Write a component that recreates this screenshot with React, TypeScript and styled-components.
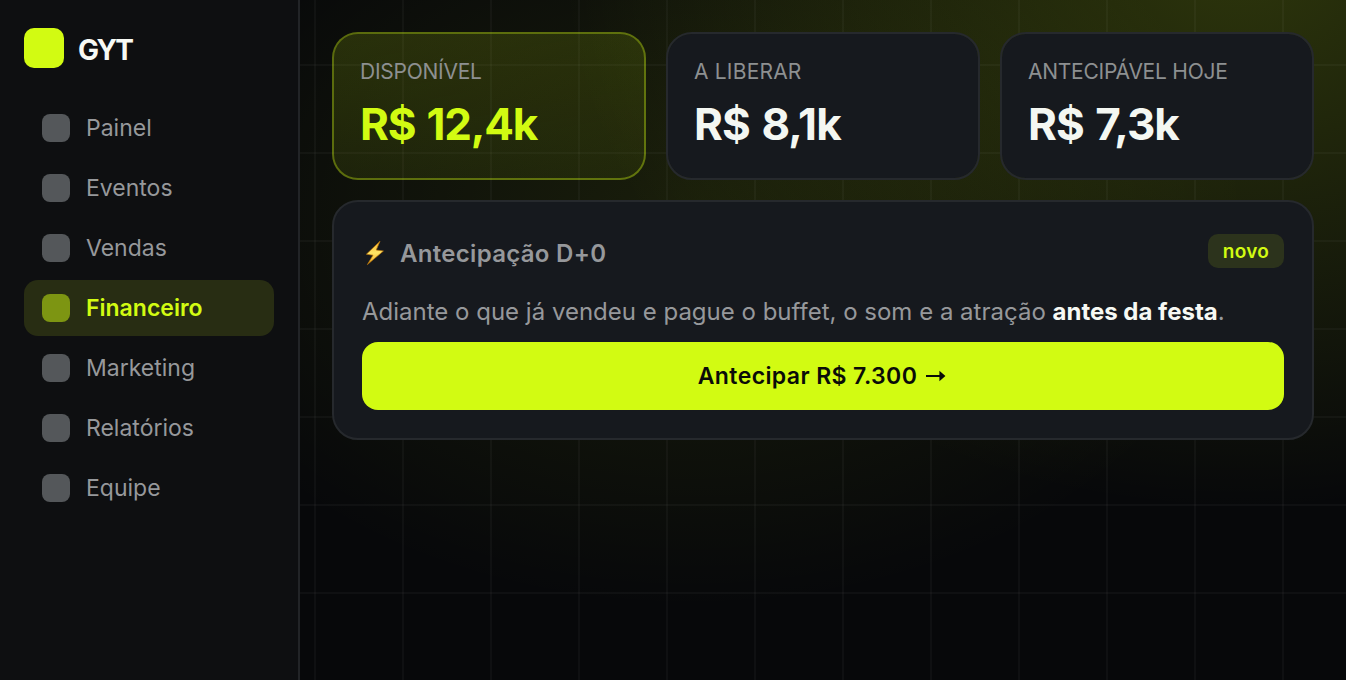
import React from 'react';
import styled, {createGlobalStyle} from 'styled-components';

type NavItemType = {
    title: string
    active?: boolean
}
type StatType = {
    label: string
    value: string
    highlight?: boolean
    labelSpacing: number
    valueSpacing: number
}

const navItems: NavItemType[] = [
    {title: 'Painel'},
    {title: 'Eventos'},
    {title: 'Vendas'},
    {title: 'Financeiro', active: true},
    {title: 'Marketing'},
    {title: 'Relatórios'},
    {title: 'Equipe'},
]

const stats: StatType[] = [
    {label: 'DISPONÍVEL', value: 'R$ 12,4k', highlight: true, labelSpacing: -0.25, valueSpacing: -1.2},
    {label: 'A LIBERAR', value: 'R$ 8,1k', labelSpacing: 0.2, valueSpacing: -0.9},
    {label: 'ANTECIPÁVEL HOJE', value: 'R$ 7,3k', labelSpacing: -0.25, valueSpacing: -1},
]

const App = () => {
    return (
        <Page>
            <GlobalStyle/>
            <Sidebar>
                <Brand>
                    <Logo/>
                    <BrandName>GYT</BrandName>
                </Brand>
                <Nav>
                    {navItems.map(item => (
                        <NavItem key={item.title} $active={item.active}>
                            <NavIcon $active={item.active}/>
                            {item.title}
                        </NavItem>
                    ))}
                </Nav>
            </Sidebar>
            <Main>
                <Stats>
                    {stats.map(stat => (
                        <StatCard key={stat.label} $highlight={stat.highlight}>
                            <StatLabel $spacing={stat.labelSpacing}>{stat.label}</StatLabel>
                            <StatValue $highlight={stat.highlight} $spacing={stat.valueSpacing}>{stat.value}</StatValue>
                        </StatCard>
                    ))}
                </Stats>
                <Panel>
                    <PanelHead>
                        <Bolt/>
                        <PanelTitle>Antecipação D+0</PanelTitle>
                        <Badge>novo</Badge>
                    </PanelHead>
                    <PanelText>
                        Adiante o que já vendeu e pague o buffet, o som e a atração <strong>antes da festa</strong>.
                    </PanelText>
                    <Button>
                        <span>Antecipar R$ 7.300</span>
                        <Arrow/>
                    </Button>
                </Panel>
            </Main>
        </Page>
    );
};

export default App;

const Bolt = () => (
    <BoltSvg viewBox="0 0 26 28">
        <defs>
            <linearGradient id="bolt" x1="0" y1="0" x2="0" y2="1">
                <stop offset="0" stopColor="#f9b42a"/>
                <stop offset="0.5" stopColor="#ffe566"/>
                <stop offset="1" stopColor="#f5a81c"/>
            </linearGradient>
        </defs>
        <path d="M18 2.2 4.4 15.2 11 16.2 5.4 25.6 21.4 12 14.2 11Z" fill="url(#bolt)" stroke="#b8740c"
              strokeWidth="0.7" strokeLinejoin="round"/>
    </BoltSvg>
)

const Arrow = () => (
    <ArrowSvg viewBox="0 0 20 12">
        <path d="M0 5h13.4V0.8L19.4 6 13.4 11.2V7H0Z" fill="#0a0c08"/>
    </ArrowSvg>
)

const GlobalStyle = createGlobalStyle`
  * {
    box-sizing: border-box;
  }

  body {
    margin: 0;
    background: #07080a;
    font-family: Inter, "Liberation Sans", sans-serif;
  }
`

const Page = styled.div`
  display: flex;
  height: 680px;
  overflow: hidden;
`

const Sidebar = styled.aside`
  width: 300px;
  flex-shrink: 0;
  padding: 28px 24px;
  background-color: #0e0f11;
  border-right: 2px solid #222427;
`

const Brand = styled.div`
  display: flex;
  align-items: center;
  gap: 14px;
  height: 40px;
  margin-bottom: 32px;
`

const Logo = styled.div`
  width: 40px;
  height: 40px;
  border-radius: 10px;
  background-color: #d2fb12;
`

const BrandName = styled.div`
  padding-top: 3px;
  color: #f7f9f4;
  font-size: 28px;
  font-weight: 700;
  line-height: 40px;
  letter-spacing: -1.8px;
`

const Nav = styled.nav`
  display: flex;
  flex-direction: column;
  gap: 4px;
`

const NavItem = styled.div<{ $active?: boolean }>`
  display: flex;
  align-items: center;
  gap: 16px;
  width: 250px;
  height: 56px;
  padding: 0 18px;
  border-radius: 14px;
  background-color: ${props => props.$active ? '#282d13' : 'transparent'};
  color: ${props => props.$active ? '#d2fb12' : '#96989b'};
  font-size: 23px;
  font-weight: ${props => props.$active ? 600 : 400};
`

const NavIcon = styled.span<{ $active?: boolean }>`
  width: 28px;
  height: 28px;
  border-radius: 8px;
  background-color: ${props => props.$active ? '#7d9512' : '#54575a'};
`

const Main = styled.main`
  flex: 1;
  display: flex;
  flex-direction: column;
  gap: 20px;
  padding: 32px;
  background-image: linear-gradient(rgba(255, 255, 255, 0.03) 2px, transparent 2px),
    linear-gradient(90deg, rgba(255, 255, 255, 0.03) 2px, transparent 2px),
    radial-gradient(680px 560px at 940px -50px, rgba(210, 251, 18, 0.19), transparent),
    radial-gradient(560px 390px at 390px 220px, rgba(210, 251, 18, 0.09), transparent);
  background-size: 88px 88px, 88px 88px, 100% 100%, 100% 100%;
  background-position: 0 64px, 14px 0, 0 0, 0 0;
`

const Stats = styled.div`
  display: grid;
  grid-template-columns: repeat(3, 1fr);
  gap: 20px;
`

const StatCard = styled.div<{ $highlight?: boolean }>`
  height: 148px;
  padding: 22px 26px;
  border: 2px solid ${props => props.$highlight ? 'rgba(210, 251, 18, 0.4)' : '#26292d'};
  border-radius: 26px;
  background: ${props => props.$highlight
    ? 'linear-gradient(170deg, rgba(210, 251, 18, 0.15), rgba(210, 251, 18, 0.06))'
    : '#16191e'};
  background-clip: padding-box;
`

const StatLabel = styled.div<{ $spacing: number }>`
  padding-top: 1px;
  color: #8d9091;
  font-size: 21px;
  line-height: 30px;
  letter-spacing: ${props => props.$spacing}px;
`

const StatValue = styled.div<{ $highlight?: boolean, $spacing: number }>`
  margin-top: 13px;
  color: ${props => props.$highlight ? '#d2fb12' : '#f4f7f2'};
  font-size: 44px;
  font-weight: 700;
  line-height: 48px;
  letter-spacing: ${props => props.$spacing}px;
  word-spacing: 2px;
`

const Panel = styled.section`
  height: 240px;
  padding: 28px;
  border: 2px solid #26292d;
  border-radius: 26px;
  background-color: #16191e;
`

const PanelHead = styled.div`
  display: flex;
  align-items: center;
  height: 46px;
`

const BoltSvg = styled.svg`
  width: 26px;
  height: 28px;
  margin-right: 12px;
`

const PanelTitle = styled.div`
  padding-top: 2px;
  color: #96989b;
  font-size: 24px;
  font-weight: 600;
  line-height: 46px;
  letter-spacing: 0.3px;
`

const Badge = styled.div`
  align-self: flex-start;
  width: 76px;
  height: 34px;
  margin: 4px 0 0 auto;
  border-radius: 10px;
  background-color: #2c331c;
  color: #d2fb12;
  font-size: 19px;
  font-weight: 600;
  line-height: 35px;
  letter-spacing: 0.3px;
  text-align: center;
`

const PanelText = styled.p`
  margin: 20px 0 14px;
  color: #96989b;
  font-size: 24px;
  line-height: 32px;
  white-space: nowrap;

  strong {
    color: #f7f9f4;
    font-weight: 700;
  }
`

const Button = styled.button`
  display: flex;
  align-items: center;
  justify-content: center;
  gap: 9px;
  width: 100%;
  height: 68px;
  padding: 0 2px 0 0;
  border: none;
  border-radius: 16px;
  background-color: #d2fb12;
  color: #0a0c08;
  font-family: inherit;
  font-size: 23px;
  font-weight: 600;
  letter-spacing: 0.4px;
`

const ArrowSvg = styled.svg`
  width: 20px;
  height: 12px;
`
